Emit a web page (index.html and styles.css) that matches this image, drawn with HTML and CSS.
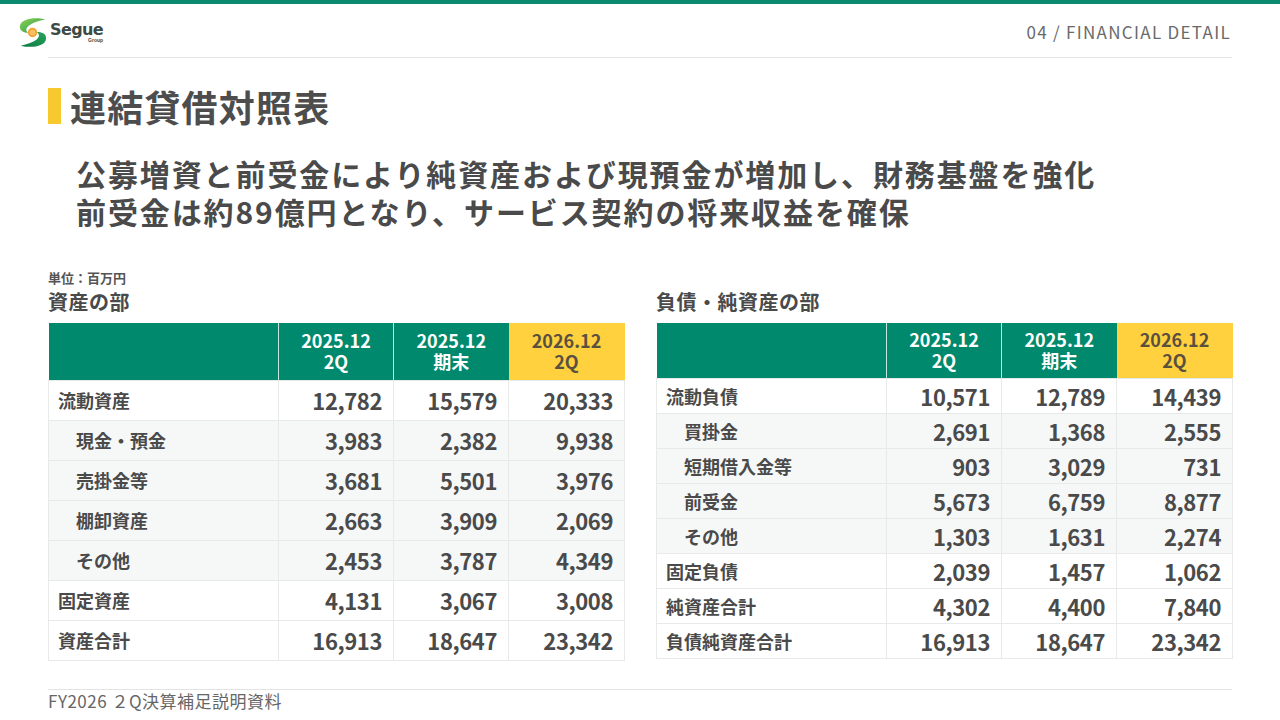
FILE: index.html
```html
<!DOCTYPE html>
<html lang="ja">
<head>
<meta charset="utf-8">
<title>連結貸借対照表</title>
<link rel="stylesheet" href="styles.css">
</head>
<body>
<div class="page">
  <div class="topbar"></div>
  <header class="header">
    <div class="logo">
      <svg class="logo-mark" viewBox="0 0 32 32" width="30" height="31" aria-hidden="true">
        <defs>
          <linearGradient id="g1" x1="0" y1="0" x2="1" y2="1">
            <stop offset="0" stop-color="#8fd14f"/>
            <stop offset="1" stop-color="#1f9a55"/>
          </linearGradient>
          <linearGradient id="g2" x1="1" y1="0" x2="0" y2="1">
            <stop offset="0" stop-color="#2aa35a"/>
            <stop offset="1" stop-color="#0d7a45"/>
          </linearGradient>
        </defs>
        <path d="M29 2 C19 -1 3 1 2 9 C1.5 14 6 16 11 16.5 C6 13 9 6 29 2 Z" fill="url(#g1)"/>
        <path d="M3 30 C13 33 30 31 30 22 C30 17 25 15.5 20 15.5 C25 19 23 26 3 30 Z" fill="url(#g2)"/>
        <path d="M8 13 C12 17 20 15 24 19 C20 15 12 17 8 13 Z" fill="#3aa860"/>
        <circle cx="15.5" cy="16" r="5" fill="#f0a030"/>
        <circle cx="15.5" cy="16" r="3.2" fill="#f7c060"/>
      </svg>
      <div class="logo-text">
        <span class="logo-name">Segue</span>
        <span class="logo-sub">Group</span>
      </div>
    </div>
    <div class="section-label">04 / FINANCIAL DETAIL</div>
  </header>
  <div class="rule"></div>

  <h1 class="title"><span class="title-bar"></span><span>連結貸借対照表</span></h1>

  <p class="lead">公募増資と前受金により純資産および現預金が増加し、財務基盤を強化<br>前受金は約89億円となり、サービス契約の将来収益を確保</p>

  <div class="unit">単位：百万円</div>
  <div class="tables">
    <section class="block">
      <h2 class="block-title">資産の部</h2>
      <table class="bs bs-left">
        <colgroup><col class="c-label"><col class="c-num"><col class="c-num"><col class="c-num3"></colgroup>
        <thead>
          <tr><th></th><th><span class="hd">2025.12</span><span class="hd">2Q</span></th><th><span class="hd">2025.12</span><span class="hd">期末</span></th><th class="hl"><span class="hd">2026.12</span><span class="hd">2Q</span></th></tr>
        </thead>
        <tbody>
          <tr><td class="lbl">流動資産</td><td>12,782</td><td>15,579</td><td>20,333</td></tr>
          <tr class="sub"><td class="lbl">現金・預金</td><td>3,983</td><td>2,382</td><td>9,938</td></tr>
          <tr class="sub"><td class="lbl">売掛金等</td><td>3,681</td><td>5,501</td><td>3,976</td></tr>
          <tr class="sub"><td class="lbl">棚卸資産</td><td>2,663</td><td>3,909</td><td>2,069</td></tr>
          <tr class="sub"><td class="lbl">その他</td><td>2,453</td><td>3,787</td><td>4,349</td></tr>
          <tr><td class="lbl">固定資産</td><td>4,131</td><td>3,067</td><td>3,008</td></tr>
          <tr><td class="lbl">資産合計</td><td>16,913</td><td>18,647</td><td>23,342</td></tr>
        </tbody>
      </table>
    </section>
    <section class="block">
      <h2 class="block-title">負債・純資産の部</h2>
      <table class="bs bs-right">
        <colgroup><col class="c-label"><col class="c-num"><col class="c-num"><col class="c-num3"></colgroup>
        <thead>
          <tr><th></th><th><span class="hd">2025.12</span><span class="hd">2Q</span></th><th><span class="hd">2025.12</span><span class="hd">期末</span></th><th class="hl"><span class="hd">2026.12</span><span class="hd">2Q</span></th></tr>
        </thead>
        <tbody>
          <tr><td class="lbl">流動負債</td><td>10,571</td><td>12,789</td><td>14,439</td></tr>
          <tr class="sub"><td class="lbl">買掛金</td><td>2,691</td><td>1,368</td><td>2,555</td></tr>
          <tr class="sub"><td class="lbl">短期借入金等</td><td>903</td><td>3,029</td><td>731</td></tr>
          <tr class="sub"><td class="lbl">前受金</td><td>5,673</td><td>6,759</td><td>8,877</td></tr>
          <tr class="sub"><td class="lbl">その他</td><td>1,303</td><td>1,631</td><td>2,274</td></tr>
          <tr><td class="lbl">固定負債</td><td>2,039</td><td>1,457</td><td>1,062</td></tr>
          <tr><td class="lbl">純資産合計</td><td>4,302</td><td>4,400</td><td>7,840</td></tr>
          <tr><td class="lbl">負債純資産合計</td><td>16,913</td><td>18,647</td><td>23,342</td></tr>
        </tbody>
      </table>
    </section>
  </div>

  <footer class="footer">FY2026 ２Q決算補足説明資料</footer>
</div>
</body>
</html>
```

FILE: styles.css
```css
* { box-sizing: border-box; }
html, body { margin: 0; padding: 0; background: #ffffff; }
body {
  font-family: "Noto Sans CJK JP", "Noto Sans", "Liberation Sans", sans-serif;
  color: #4a4a4a;
}
.page {
  width: 1280px;
  height: 720px;
  overflow: hidden;
  position: relative;
}
.topbar { height: 4px; background: #0a8a6e; }

.header {
  height: 53px;
  display: flex;
  align-items: center;
  justify-content: space-between;
  padding: 0 49px 0 18px;
}
.logo { display: flex; align-items: center; gap: 2px; margin-top: 4px; }
.logo-mark { display: block; }
.logo-text { display: flex; flex-direction: column; align-items: flex-end; line-height: 1; }
.logo-name {
  font-family: "DejaVu Sans", "Liberation Sans", sans-serif;
  font-weight: 700;
  font-size: 16px;
  letter-spacing: -0.6px;
  color: #3b4a42;
}
.logo-sub {
  font-family: "Liberation Sans", sans-serif;
  font-weight: 700;
  font-size: 5px;
  color: #3b4a42;
}
.section-label {
  font-size: 17px;
  letter-spacing: 1.3px;
  color: #6a6a6a;
  margin-top: 2px;
}
.rule { height: 1px; margin: 0 48px; background: #e6e6e6; }

.title {
  margin: 30px 48px 0;
  height: 36px;
  display: flex;
  align-items: center;
  gap: 9px;
  font-size: 36px;
  font-weight: 700;
  line-height: 36px;
  letter-spacing: 1.2px;
  color: #4d4d4d;
}
.title-bar { width: 13px; height: 36px; background: #f7c92f; flex: none; }

.lead {
  margin: 30px 0 0 76px;
  font-size: 30px;
  line-height: 38px;
  font-weight: 700;
  letter-spacing: 1.9px;
  color: #4a4a4a;
}

.unit {
  margin: 39px 0 0 48px;
  font-size: 13px;
  line-height: 18px;
  font-weight: 700;
  color: #555555;
}
.tables {
  display: grid;
  grid-template-columns: 576px 576px;
  column-gap: 32px;
  margin: 0 48px;
}
.block-title {
  margin: 1px 0 8px;
  font-size: 20px;
  line-height: 27px;
  font-weight: 700;
  letter-spacing: 0.5px;
  color: #4a4a4a;
}

.bs {
  width: 576px;
  border-collapse: collapse;
  table-layout: fixed;
}
.c-label { width: 230px; }
.c-num { width: 115px; }
.c-num3 { width: 116px; }
.bs th {
  background: #00896c;
  color: #ffffff;
  font-size: 18px;
  font-weight: 700;
  text-align: center;
  border-left: 1px solid #c7e6dd;
  padding: 0;
}
.bs th .hd { display: block; line-height: 21px; }
.bs th:first-child { border-left: none; }
.bs th.hl { background: #ffd13f; color: #5a5040; border-left: none; }
.bs td {
  border: 1px solid #e8e9e9;
  padding: 0 11px 0 0;
  text-align: right;
  font-size: 22px;
  font-weight: 700;
  letter-spacing: -0.4px;
  color: #4a4a4a;
}
.bs td.lbl {
  text-align: left;
  padding-left: 9px;
  font-size: 18px;
  letter-spacing: 0;
}
.bs tr.sub td { background: #f6f7f7; }
.bs tr.sub td.lbl { padding-left: 27px; }

.bs-left thead tr { height: 57px; }
.bs-left tbody tr { height: 40px; }
.bs-right thead tr { height: 55px; }
.bs-right tbody tr { height: 35px; }

.footer {
  position: absolute;
  left: 48px;
  right: 48px;
  top: 689px;
  border-top: 1px solid #e3e3e3;
  padding-top: 0;
  font-size: 17px;
  line-height: 21px;
  letter-spacing: 0.5px;
  color: #666666;
}
```
